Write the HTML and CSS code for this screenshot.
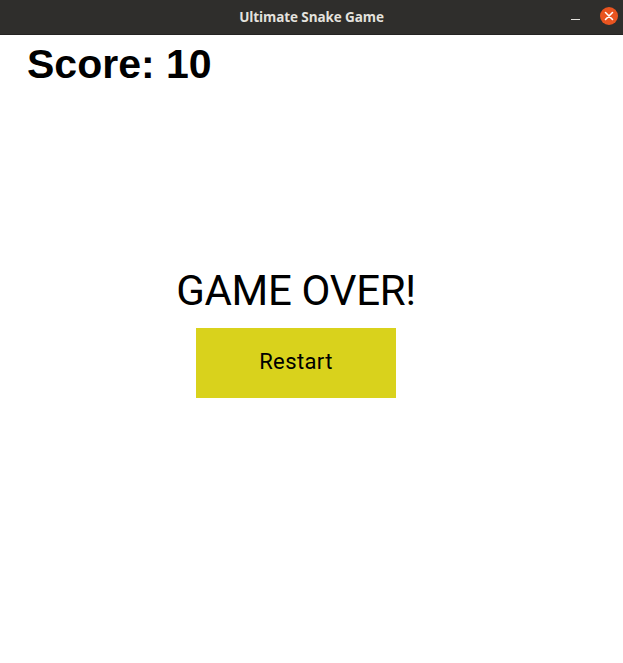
FILE: index.html
```html
<!DOCTYPE html>
<html>
<head>
<meta charset="utf-8">
<link rel="stylesheet" href="styles.css">
</head>
<body>
<div class="window">
  <div class="titlebar">
    <span class="title">Ultimate Snake Game</span>
    <div class="controls">
      <span class="minimize"></span>
      <span class="close">
        <svg width="18" height="18" viewBox="0 0 18 18"><circle cx="9" cy="9" r="9" fill="#e95420"/><path d="M5.5 5.5 L12.5 12.5 M12.5 5.5 L5.5 12.5" stroke="#fff" stroke-width="1.6" stroke-linecap="round"/></svg>
      </span>
    </div>
  </div>
  <div class="content">
    <div class="score">Score: 10</div>
    <div class="stage">
      <div class="gameover">GAME OVER!</div>
      <button class="restart">Restart</button>
    </div>
  </div>
</div>
</body>
</html>
```
FILE: styles.css
```css
html, body {
  margin: 0;
  padding: 0;
  background: #ffffff;
}
.window {
  width: 623px;
  height: 663px;
  display: flex;
  flex-direction: column;
  overflow: hidden;
}
.titlebar {
  height: 35px;
  flex: 0 0 35px;
  background: #2f2e2c;
  display: flex;
  align-items: center;
  justify-content: center;
  position: relative;
  box-sizing: border-box;
  border-bottom: 1px solid #242322;
}
.title {
  font-family: "Open Sans", "DejaVu Sans", sans-serif;
  font-weight: 700;
  font-size: 13.5px;
  color: #e4e2de;
  letter-spacing: -0.1px;
}
.controls {
  position: absolute;
  right: 5px;
  top: 7px;
  display: flex;
  align-items: center;
  gap: 20px;
}
.minimize {
  display: block;
  width: 9px;
  height: 1px;
  background: #e4e2de;
  margin-top: 6px;
}
.close {
  display: block;
  width: 18px;
  height: 18px;
}
.close svg { display: block; }
.content {
  flex: 1;
  background: #ffffff;
}
.score {
  font-family: "Liberation Sans", Arial, sans-serif;
  font-weight: 700;
  font-size: 41px;
  line-height: 48px;
  margin-top: 5px;
  padding-left: 27px;
  color: #000;
}
.stage {
  margin-top: 182px;
  margin-left: 146px;
  width: 300px;
  display: flex;
  flex-direction: column;
  align-items: center;
}
.gameover {
  font-family: Roboto, "DejaVu Sans", sans-serif;
  font-weight: 400;
  font-size: 42px;
  line-height: 42px;
  letter-spacing: -0.3px;
  color: #000;
}
.restart {
  margin-top: 16px;
  width: 200px;
  height: 70px;
  border: none;
  background: #d9d21c;
  font-family: Roboto, "DejaVu Sans", sans-serif;
  font-size: 22px;
  letter-spacing: 0.4px;
  color: #000;
  padding: 0 0 4px 0;
  box-sizing: border-box;
  display: flex;
  align-items: center;
  justify-content: center;
}
```
